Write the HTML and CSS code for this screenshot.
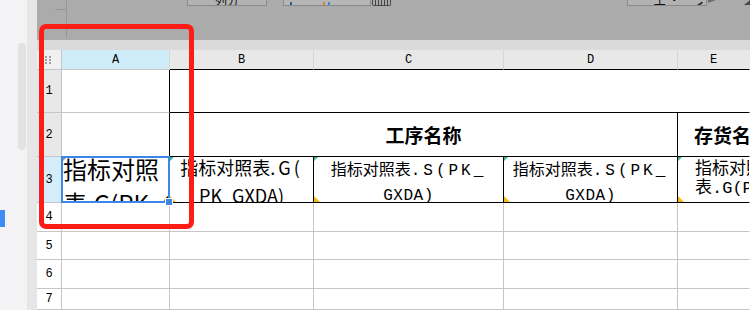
FILE: index.html
```html
<!DOCTYPE html>
<html lang="zh">

<head>
    <meta charset="UTF-8">
    <meta name="viewport" content="width=device-width, initial-scale=1.0">
    <title>sheet</title>
    <link rel="stylesheet" href="styles.css">
</head>

<body>

    <div class="app">
        <aside class="side">
            <div class="thumb"></div>
            <div class="mark"></div>
        </aside>

        <div class="gutter"></div>

        <main class="main">
            <div class="toolbar">
                <div class="ruler"><i></i><i></i></div>
                <div class="tbBtn btnA"><span>列分</span></div>
                <div class="tbBtn btnB"><b class="dot blue"></b><b class="dot orange"></b><b class="dot sky"></b></div>
                <div class="tbIco"></div>
                <div class="tbBtn btnC"><span>工 ·</span><em class="pen"></em></div>
                <div class="tbDark"></div>
                <div class="tbDark end"></div>
            </div>

            <div class="band"></div>

            <div class="sheet">
                <!-- column headers -->
                <div class="c hd corner">
                    <svg width="8" height="8" viewBox="0 0 8 8">
                        <g fill="#a0a0a0">
                            <rect x="0" y="0" width="2" height="2"/><rect x="4" y="0" width="2" height="2"/>
                            <rect x="0" y="3" width="2" height="2"/><rect x="4" y="3" width="2" height="2"/>
                            <rect x="0" y="6" width="2" height="2"/><rect x="4" y="6" width="2" height="2"/>
                        </g>
                    </svg>
                </div>
                <div class="c hd selCol">A</div>
                <div class="c hd bk">B</div>
                <div class="c hd bk">C</div>
                <div class="c hd bk">D</div>
                <div class="c hd bk last">E</div>

                <!-- row 1 -->
                <div class="c rh grey">1</div>
                <div class="c colA"></div>
                <div class="c mergeB1"></div>

                <!-- row 2 -->
                <div class="c rh grey">2</div>
                <div class="c colA"></div>
                <div class="c mergeB2">工序名称</div>
                <div class="c titleE">存货名称</div>

                <!-- row 3 -->
                <div class="c rh selRow">3</div>
                <div class="c colA active">
                    <span class="triGrey"></span>
                    <div class="bigText">指标对照<br>表.G(PK_GXDA)</div>
                </div>
                <div class="c r3 note">
                    <div class="txtB">指标对照表<span class="lat">.G(</span><br>PK_GXDA)</div>
                </div>
                <div class="c r3 note">
                    <div class="txtS">指标对照表<span class="lat wide">.S(PK_</span><br><span class="lat">GXDA)</span></div>
                </div>
                <div class="c r3 note">
                    <div class="txtS">指标对照表<span class="lat wide">.S(PK_</span><br><span class="lat">GXDA)</span></div>
                </div>
                <div class="c r3 note last">
                    <div class="txtE">指标对照<br>表<span class="lat">.G(PK_GXDA)</span></div>
                </div>

                <!-- rows 4 - 7 -->
                <div class="c rh">4</div>
                <div class="c"></div><div class="c"></div><div class="c"></div><div class="c"></div><div class="c last"></div>
                <div class="c rh">5</div>
                <div class="c"></div><div class="c"></div><div class="c"></div><div class="c"></div><div class="c last"></div>
                <div class="c rh">6</div>
                <div class="c"></div><div class="c"></div><div class="c"></div><div class="c"></div><div class="c last"></div>
                <div class="c rh">7</div>
                <div class="c"></div><div class="c"></div><div class="c"></div><div class="c"></div><div class="c last"></div>
            </div>
        </main>
    </div>

    <!-- red marker drawn over the screenshot -->
    <div class="annot"></div>

</body>

</html>
```

FILE: styles.css
```css
* {
    margin: 0;
    padding: 0;
    box-sizing: border-box;
}

body {
    width: 750px;
    height: 310px;
    overflow: hidden;
    position: relative;
    background: #fff;
    font-family: "Noto Sans CJK SC", "Liberation Sans", sans-serif;
    color: #000;
}

.app {
    display: flex;
    height: 310px;
}

/* left panel */
.side {
    width: 27px;
    background: #f3f3f5;
    display: flex;
    flex-direction: column;
}

.side .thumb {
    margin: 43px 0 0 18px;
    width: 8px;
    height: 107px;
    border-radius: 4px;
    background: #e2e2e4;
}

.side .mark {
    margin-top: 60px;
    width: 5px;
    height: 17px;
    background: #3e8bf6;
}

.gutter {
    width: 10px;
    background: #e6e6e6;
}

.main {
    flex: 1;
    min-width: 0;
    display: flex;
    flex-direction: column;
    overflow: hidden;
}

/* dimmed toolbar */
.toolbar {
    height: 40px;
    background: #ababab;
    display: flex;
    align-items: flex-start;
}

.ruler {
    margin-left: 13px;
    width: 17px;
    height: 38px;
    border-right: 1px solid #979797;
    display: flex;
    flex-direction: column;
    align-items: flex-end;
}

.ruler i {
    width: 11px;
    height: 1px;
    background: #979797;
    margin-top: 9px;
}

.ruler i + i {
    margin-top: 18px;
}

.tbBtn {
    height: 6px;
    border: 1px solid #8a8a8a;
    border-top: none;
    background: #b2b2b2;
    overflow: hidden;
    display: flex;
    align-items: flex-end;
    justify-content: center;
    font-size: 12px;
    line-height: 12px;
}

.tbBtn span {
    margin-bottom: -1px;
    color: #111;
}

.btnA {
    margin-left: 120px;
    width: 80px;
}

.btnB {
    margin-left: 16px;
    width: 88px;
    background: #b6b6b6;
    justify-content: flex-start;
    gap: 3px;
}

.dot {
    width: 2px;
    height: 3px;
}

.dot.blue {
    margin-left: 6px;
    margin-right: 28px;
    background: #2c5aa0;
}

.dot.orange {
    background: #d8822a;
}

.dot.sky {
    background: #3d86d6;
}

.tbIco {
    margin-left: 1px;
    width: 19px;
    height: 6px;
    border: 1px solid #4a4a4a;
    border-top: none;
    border-radius: 0 0 2px 2px;
    background: repeating-linear-gradient(90deg, #aaa 0 2px, #444 2px 3px);
}

.btnC {
    margin-left: 236px;
    width: 80px;
    position: relative;
}

.pen {
    position: absolute;
    right: 3px;
    bottom: 0;
    width: 6px;
    height: 2px;
    background: #333;
    transform: rotate(-35deg);
}

.tbDark {
    margin-left: 1px;
    width: 8px;
    height: 3px;
    background: #6d6d6d;
    clip-path: polygon(0 0, 100% 0, 0 100%);
}

.tbDark.end {
    margin-left: auto;
    width: 6px;
    height: 5px;
    background: #4a4a4a;
    clip-path: polygon(100% 0, 100% 100%, 0 100%);
}

.band {
    height: 10px;
    background: #dadadb;
}

/* spreadsheet grid */
.sheet {
    flex: 1;
    display: grid;
    grid-template-columns: 25px 108px 144px 190px 174px 1fr;
    grid-template-rows: 20px 43px 44px 46px 29px 28px 29px 1fr;
}

.c {
    position: relative;
    border-right: 1px solid #c6c6c6;
    border-bottom: 1px solid #c6c6c6;
    min-width: 0;
}

.c.last {
    border-right-color: transparent;
}

.hd {
    background: #e8e8e8;
    border-right-color: #d6d6d6;
    font-family: "Liberation Mono", monospace;
    font-size: 12px;
    display: flex;
    align-items: center;
    justify-content: center;
}

.hd.corner {
    background: #f0f0f0;
    border-right-color: #c6c6c6;
}

.hd.selCol {
    background: #cfedf9;
}

.hd.bk {
    border-bottom-color: #000;
}

.rh {
    display: flex;
    align-items: center;
    justify-content: center;
    font-family: "Liberation Mono", monospace;
    font-size: 12px;
}

.rh.grey {
    background: #e8e8e8;
}

.rh.selRow {
    background: #d3eefa;
}

.colA {
    border-right-color: #000;
}

.mergeB1 {
    grid-column: span 4;
    border-bottom-color: #000;
    border-right-color: transparent;
}

.mergeB2 {
    grid-column: span 3;
    border-right-color: #000;
    border-bottom-color: #000;
    display: flex;
    align-items: center;
    justify-content: center;
    font-size: 19px;
    font-weight: bold;
}

.titleE {
    border-bottom-color: #000;
    border-right-color: transparent;
    display: flex;
    align-items: center;
    padding-left: 16px;
    font-size: 19px;
    font-weight: bold;
    white-space: nowrap;
    overflow: hidden;
}

.r3 {
    border-right-color: #000;
    border-bottom-color: #000;
    overflow: hidden;
}

.r3.last {
    border-right-color: transparent;
}

/* comment marks in row 3 */
.note::before {
    content: "";
    position: absolute;
    top: 0;
    left: 0;
    border-top: 4px solid #2fb79b;
    border-right: 4px solid transparent;
}

.note::after {
    content: "";
    position: absolute;
    bottom: 0;
    left: 0;
    border-bottom: 6px solid #f4bb10;
    border-right: 6px solid transparent;
}

.lat {
    font-family: "Liberation Mono", monospace;
    line-height: 1;
}

.txtB {
    margin-top: -4px;
    font-size: 18px;
    line-height: 28px;
    text-align: center;
    white-space: nowrap;
}

.txtB .lat {
    font-family: "Noto Sans CJK SC", sans-serif;
    letter-spacing: 3px;
}

.txtS {
    margin-top: -1px;
    font-size: 16px;
    line-height: 25px;
    text-align: center;
    white-space: nowrap;
}

.txtS .lat {
    font-size: 16px;
    letter-spacing: 0.5px;
}

.txtS .lat.wide {
    letter-spacing: 3px;
}

.txtE {
    padding-left: 17px;
    font-size: 17px;
    line-height: 19px;
    white-space: nowrap;
}

.txtE .lat {
    font-size: 17px;
}

/* selected cell A3 */
.active {
    border-bottom-color: #c6c6c6;
}

.bigText {
    position: relative;
    top: -5px;
    height: calc(100% + 5px);
    overflow: hidden;
    clip-path: inset(5px 0 0 0);
    padding-left: 1px;
    font-size: 24px;
    line-height: 34px;
    white-space: nowrap;
}

.active::after {
    content: "";
    position: absolute;
    inset: -1px;
    border: 2px solid #3b86e6;
    z-index: 2;
}

.active::before {
    content: "";
    position: absolute;
    right: -4px;
    bottom: -4px;
    width: 6px;
    height: 6px;
    background: #3b86e6;
    border: 1px solid #fff;
    z-index: 3;
}

.triGrey {
    position: absolute;
    top: 1px;
    left: 1px;
    border-top: 3px solid #999;
    border-right: 3px solid transparent;
    z-index: 1;
}

/* red marker over the picture */
.annot {
    position: absolute;
    left: 39px;
    top: 24px;
    width: 155px;
    height: 205px;
    border: 5px solid #fe1d16;
    border-radius: 7px;
    z-index: 10;
}
```
